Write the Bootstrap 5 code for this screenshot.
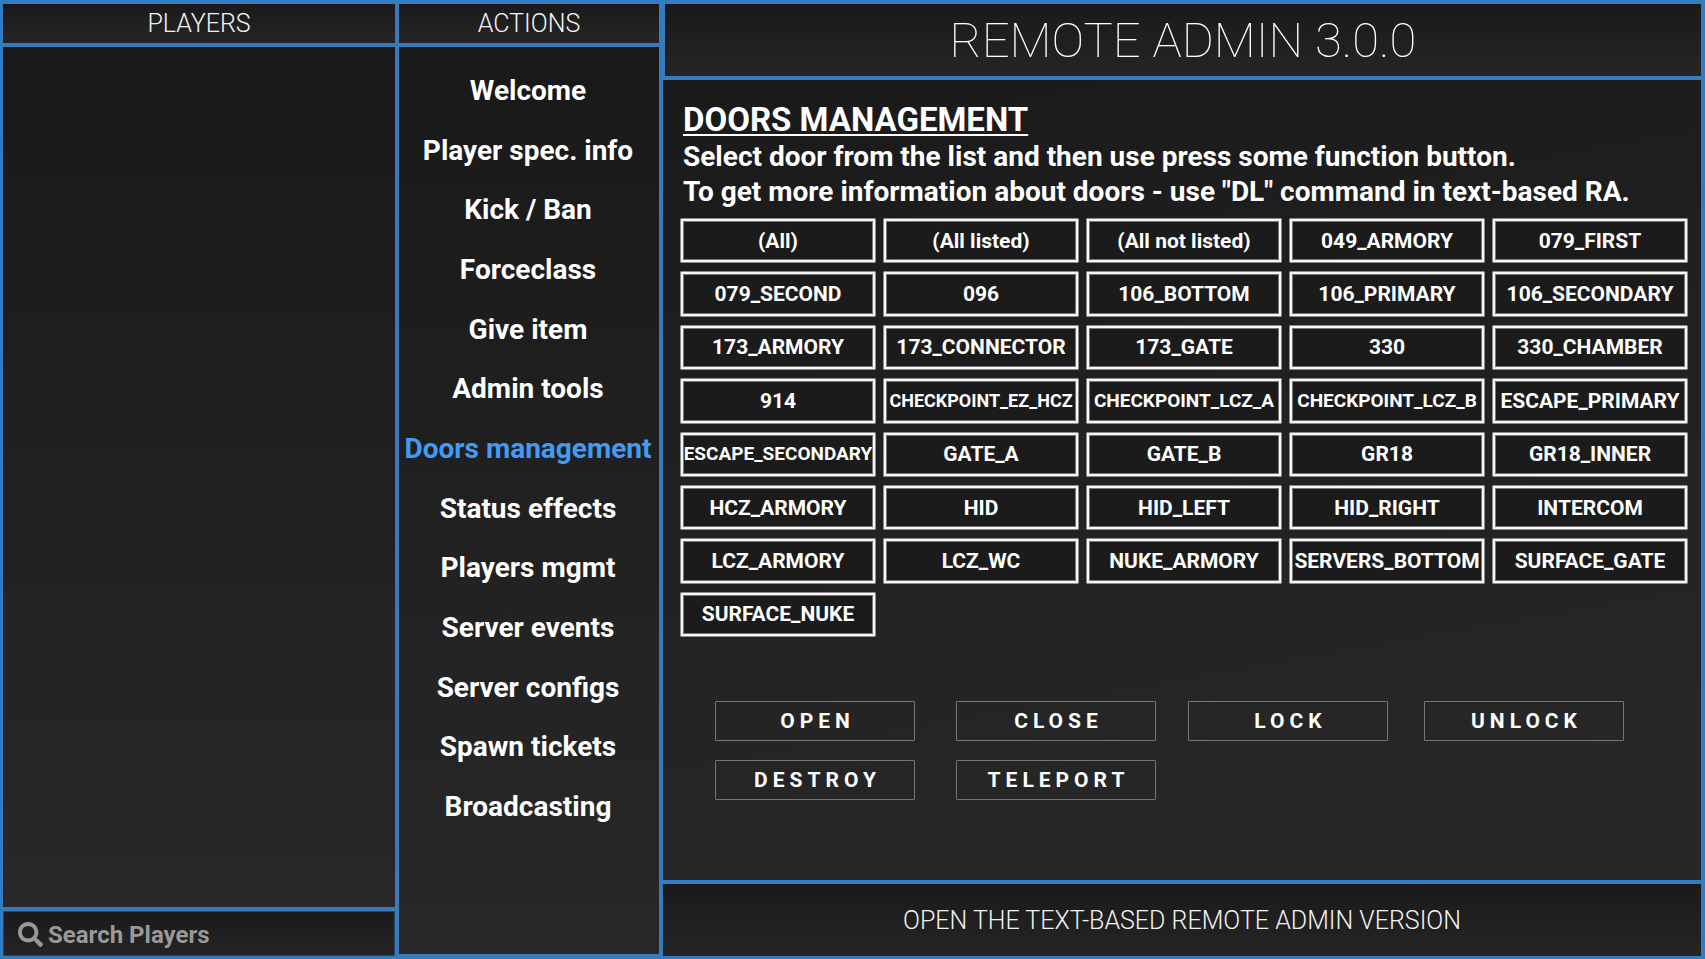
<!DOCTYPE html>
<html lang="en">
<head>
<meta charset="utf-8">
<meta name="viewport" content="width=device-width, initial-scale=1">
<title>Remote Admin</title>
<link href="https://cdn.jsdelivr.net/npm/bootstrap@5.3.0/dist/css/bootstrap.min.css" rel="stylesheet">
<style>
  :root { --line: #337cc0; --dark: #1a1a1a; --light: #252525; }
  body { font-family: Roboto, "Liberation Sans", sans-serif; color: #fff; background: var(--line); }
  .admin-shell {
    display: grid; grid-template-columns: 392fr 260fr 1038fr; gap: 4px;
    min-height: 100vh; padding: 4px 4px 3px 3px;
  }
  .stack { display: flex; flex-direction: column; gap: 4px; min-width: 0; }
  .stack-actions { padding-bottom: 2px; }
  .bar-face { background: linear-gradient(var(--dark), var(--light)); }
  .pane-face { background: linear-gradient(to bottom, #191919, #282828); }
  .pane-face-wide { background: linear-gradient(170deg, #1a1a1a, #272727 85%); }
  .bar-title { font-size: 25px; font-weight: 300; line-height: 39px; margin: 0; text-align: center; color: #f2f2f2; }
  .stack-actions .bar-title { line-height: 38px; padding-top: 1px; }
  .main-title { font-size: 49px; font-weight: 100; line-height: 71px; padding-top: 1px; margin: 0 0 0 2px; text-align: center; }
  .search-box { height: 45px; padding: 1px 0 0 15px; box-shadow: inset 0 0 0 1px #24486a; }
  .search-box svg { width: 25px; height: 25px; fill: #999; flex: none; }
  .search-box input { font-size: 24px; font-weight: 700; color: #999; line-height: 30px; padding: 1px 0 0 5px; }
  .search-box input::placeholder { color: #999; opacity: 1; }
  .search-box input:focus { background: transparent; color: #fff; box-shadow: none; }
  .action-nav { min-height: 776px; margin: 14px 2px 0 0; }
  .action-nav .nav-link { color: #fff; font-size: 28px; font-weight: 700; line-height: 32px; padding: 0; white-space: nowrap; }
  .action-nav .nav-link.active, .action-nav .nav-link:hover { color: #409cf5; }
  .content-pane { padding: 22px 13px 16px 17px; }
  .page-heading { font-size: 33px; font-weight: 700; line-height: 35px; margin: 0 0 2px 3px; text-decoration: underline; text-decoration-thickness: 2px; text-underline-offset: 3px; }
  .page-text { font-size: 28px; font-weight: 700; line-height: 35px; margin: 0 0 0 3px; }
  .door-grid { display: grid; grid-template-columns: repeat(5, 1fr); grid-auto-rows: 1fr; gap: 8px 7px; min-height: 419px; margin-top: 9px; }
  .door {
    color: #fff; background: #1b1b1b; border: 1px solid #8c8c8c; border-radius: 1px; padding: 0;
    box-shadow: inset 0 0 0 2px #f6f6f6, inset 0 0 0 3px #777;
    font-size: 21px; font-weight: 700; line-height: 24px; white-space: nowrap;
    display: flex; align-items: center; justify-content: center; min-width: 0;
  }
  .door-long { font-size: 19px; }
  .door-longest { font-size: 18px; }
  .command-grid { display: grid; grid-template-columns: 241fr 232fr 236fr 200fr; gap: 19px 0; margin: 64px 64px 0 35px; }
  .command {
    width: 200px; height: 40px; padding: 0 0 0 5px; color: #fff; background: transparent;
    border: 1px solid #757575; border-radius: 1px;
    font-size: 21px; font-weight: 700; letter-spacing: 5px; line-height: 24px;
  }
  .door:hover, .command:hover { background: #333; }
  .mode-link { font-size: 25px; font-weight: 300; line-height: 71px; padding-top: 1px; color: #f2f2f2; text-decoration: none; text-align: center; }
</style>
</head>
<body>
<div class="admin-shell">
  <aside class="stack">
    <h2 class="bar-title bar-face">PLAYERS</h2>
    <div class="pane-face flex-grow-1"></div>
    <div class="search-box bar-face d-flex align-items-center">
      <label for="playerSearch" class="d-flex" aria-label="Search Players">
        <svg viewBox="0 0 512 512" aria-hidden="true"><path d="M505 442.700L405.300 343c-4.500-4.500-10.600-7-17-7H372c27.600-35.300 44-79.700 44-128C416 93.100 322.900 0 208 0S0 93.100 0 208s93.100 208 208 208c48.300 0 92.700-16.400 128-44v16.300c0 6.400 2.500 12.500 7 17l99.700 99.700c9.400 9.400 24.600 9.400 33.900 0l28.300-28.300c9.400-9.400 9.400-24.600.1-34zM208 336c-70.700 0-128-57.200-128-128 0-70.700 57.200-128 128-128 70.700 0 128 57.200 128 128 0 70.700-57.200 128-128 128z"/></svg>
      </label>
      <input id="playerSearch" type="text" class="form-control border-0 bg-transparent shadow-none" placeholder="Search Players">
    </div>
  </aside>

  <section class="stack stack-actions">
    <h2 class="bar-title bar-face">ACTIONS</h2>
    <div class="pane-face flex-grow-1">
      <nav class="action-nav nav flex-column flex-nowrap text-center" aria-label="Actions">
        <a class="nav-link flex-fill d-flex align-items-center justify-content-center" href="#">Welcome</a>
        <a class="nav-link flex-fill d-flex align-items-center justify-content-center" href="#">Player spec. info</a>
        <a class="nav-link flex-fill d-flex align-items-center justify-content-center" href="#">Kick / Ban</a>
        <a class="nav-link flex-fill d-flex align-items-center justify-content-center" href="#">Forceclass</a>
        <a class="nav-link flex-fill d-flex align-items-center justify-content-center" href="#">Give item</a>
        <a class="nav-link flex-fill d-flex align-items-center justify-content-center" href="#">Admin tools</a>
        <a class="nav-link flex-fill d-flex align-items-center justify-content-center active" aria-current="page" href="#">Doors management</a>
        <a class="nav-link flex-fill d-flex align-items-center justify-content-center" href="#">Status effects</a>
        <a class="nav-link flex-fill d-flex align-items-center justify-content-center" href="#">Players mgmt</a>
        <a class="nav-link flex-fill d-flex align-items-center justify-content-center" href="#">Server events</a>
        <a class="nav-link flex-fill d-flex align-items-center justify-content-center" href="#">Server configs</a>
        <a class="nav-link flex-fill d-flex align-items-center justify-content-center" href="#">Spawn tickets</a>
        <a class="nav-link flex-fill d-flex align-items-center justify-content-center" href="#">Broadcasting</a>
      </nav>
    </div>
  </section>

  <div class="stack">
    <h1 class="main-title bar-face">REMOTE ADMIN 3.0.0</h1>
    <main class="content-pane pane-face-wide flex-grow-1">
      <h2 class="page-heading">DOORS MANAGEMENT</h2>
      <p class="page-text">Select door from the list and then use press some function button.<br>To get more information about doors - use "DL" command in text-based RA.</p>
      <div class="door-grid">
        <button type="button" class="door">(All)</button>
        <button type="button" class="door">(All listed)</button>
        <button type="button" class="door">(All not listed)</button>
        <button type="button" class="door">049_ARMORY</button>
        <button type="button" class="door">079_FIRST</button>
        <button type="button" class="door">079_SECOND</button>
        <button type="button" class="door">096</button>
        <button type="button" class="door">106_BOTTOM</button>
        <button type="button" class="door">106_PRIMARY</button>
        <button type="button" class="door">106_SECONDARY</button>
        <button type="button" class="door">173_ARMORY</button>
        <button type="button" class="door">173_CONNECTOR</button>
        <button type="button" class="door">173_GATE</button>
        <button type="button" class="door">330</button>
        <button type="button" class="door">330_CHAMBER</button>
        <button type="button" class="door">914</button>
        <button type="button" class="door door-longest">CHECKPOINT_EZ_HCZ</button>
        <button type="button" class="door door-long">CHECKPOINT_LCZ_A</button>
        <button type="button" class="door door-long">CHECKPOINT_LCZ_B</button>
        <button type="button" class="door">ESCAPE_PRIMARY</button>
        <button type="button" class="door door-long">ESCAPE_SECONDARY</button>
        <button type="button" class="door">GATE_A</button>
        <button type="button" class="door">GATE_B</button>
        <button type="button" class="door">GR18</button>
        <button type="button" class="door">GR18_INNER</button>
        <button type="button" class="door">HCZ_ARMORY</button>
        <button type="button" class="door">HID</button>
        <button type="button" class="door">HID_LEFT</button>
        <button type="button" class="door">HID_RIGHT</button>
        <button type="button" class="door">INTERCOM</button>
        <button type="button" class="door">LCZ_ARMORY</button>
        <button type="button" class="door">LCZ_WC</button>
        <button type="button" class="door">NUKE_ARMORY</button>
        <button type="button" class="door">SERVERS_BOTTOM</button>
        <button type="button" class="door">SURFACE_GATE</button>
        <button type="button" class="door">SURFACE_NUKE</button>
      </div>
      <div class="command-grid">
        <button type="button" class="command">OPEN</button>
        <button type="button" class="command">CLOSE</button>
        <button type="button" class="command">LOCK</button>
        <button type="button" class="command">UNLOCK</button>
        <button type="button" class="command">DESTROY</button>
        <button type="button" class="command">TELEPORT</button>
      </div>
    </main>
    <a class="mode-link bar-face" href="#">OPEN THE TEXT-BASED REMOTE ADMIN VERSION</a>
  </div>
</div>
<script src="https://cdn.jsdelivr.net/npm/bootstrap@5.3.0/dist/js/bootstrap.bundle.min.js"></script>
</body>
</html>
